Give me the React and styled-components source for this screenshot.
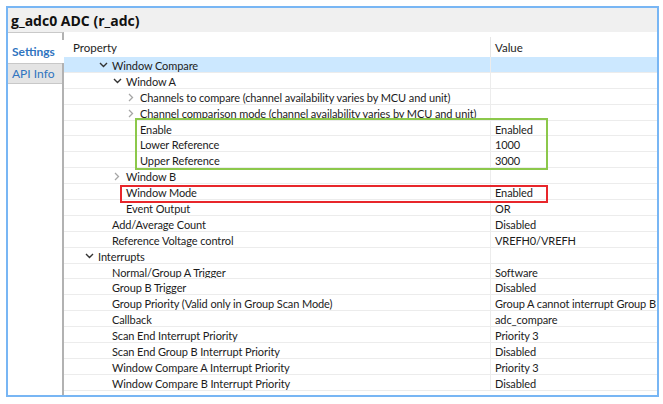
import styled, { createGlobalStyle } from "styled-components";

const GlobalStyle = createGlobalStyle`
  html, body {
    margin: 0;
    padding: 0;
    background: #ffffff;
  }
  body {
    font-family: Lato, "Open Sans", sans-serif;
    color: #1e1e1e;
  }
`;

const ROW_H = 15.9;

const Frame = styled.div`
  margin: 6px 0 0 6px;
  width: 653px;
  height: 391px;
  box-sizing: border-box;
  border: 2px solid #78b6f4;
  display: flex;
  flex-direction: column;
  overflow: hidden;
`;

const TitleBar = styled.div`
  height: 24px;
  flex: none;
  background: #f0f0f0;
  display: flex;
  align-items: center;
  padding-left: 3px;
  font-family: "Open Sans", sans-serif;
  font-size: 14px;
  font-weight: 700;
  color: #111;
`;

const Body = styled.div`
  flex: 1;
  display: flex;
  min-height: 0;
`;

const TabColumn = styled.div`
  width: 54px;
  flex: none;
  border-top: 1px solid #c9c9c9;
  border-right: 2px solid #b2b2b2;
  padding-top: 7px;
  display: flex;
  flex-direction: column;
`;

const Tab = styled.div`
  height: ${(p) => (p.$active ? 21 : 19)}px;
  display: flex;
  align-items: center;
  padding-left: 4px;
  font-size: 12px;
  color: #2f74c0;
  font-weight: ${(p) => (p.$active ? 700 : 400)};
  background: ${(p) => (p.$active ? "#ffffff" : "#e4e4e4")};
  border-top: 1px solid ${(p) => (p.$active ? "#ffffff" : "#c8c8c8")};
  border-bottom: 1px solid ${(p) => (p.$active ? "#ffffff" : "#c8c8c8")};
  margin-right: ${(p) => (p.$active ? "-2px" : "0")};
  position: relative;
`;

const TableArea = styled.div`
  flex: 1;
  padding-top: 5px;
  min-width: 0;
`;

const HeaderRow = styled.div`
  height: 20px;
  display: grid;
  grid-template-columns: 426px 1fr;
  font-size: 11.5px;
`;

const HeadCell = styled.div`
  display: flex;
  align-items: center;
  padding-left: ${(p) => p.$pad}px;
  border-left: ${(p) => (p.$divider ? "1px solid #e6e6e6" : "none")};
`;

const Rows = styled.div`
  position: relative;
`;

const Row = styled.div`
  height: ${ROW_H}px;
  box-sizing: border-box;
  display: grid;
  grid-template-columns: 426px 1fr;
  font-size: 11px;
  letter-spacing: -0.1px;
  color: #1c1c1c;
  background: ${(p) => (p.$selected ? "#cce8ff" : "transparent")};
  border-bottom: 1px solid #ececec;
`;

const PropCell = styled.div`
  display: flex;
  align-items: center;
  white-space: nowrap;
  overflow: hidden;
  padding-left: ${(p) => 2 + p.$level * 14}px;
  padding-top: 2px;
`;

const ValueCell = styled.div`
  display: flex;
  align-items: center;
  white-space: nowrap;
  overflow: hidden;
  padding-left: 4px;
  padding-top: 2px;
  border-left: 1px solid #ececec;
`;

const Twisty = styled.span`
  width: 18px;
  flex: none;
  display: inline-flex;
  justify-content: center;
  align-items: center;
`;

const Highlight = styled.div`
  position: absolute;
  box-sizing: border-box;
  border: 2px solid ${(p) => p.$color};
  pointer-events: none;
`;

const Chevron = ({ open }) =>
  open ? (
    <svg width="9" height="6" viewBox="0 0 9 6">
      <path d="M1 1 L4.5 4.5 L8 1" fill="none" stroke="#333" strokeWidth="1.4" />
    </svg>
  ) : (
    <svg width="6" height="9" viewBox="0 0 6 9">
      <path d="M1 1 L4.5 4.5 L1 8" fill="none" stroke="#a6a6a6" strokeWidth="1.3" />
    </svg>
  );

const rows = [
  { label: "Window Compare", level: 2, open: true, selected: true },
  { label: "Window A", level: 3, open: true },
  { label: "Channels to compare (channel availability varies by MCU and unit)", level: 4, open: false },
  { label: "Channel comparison mode (channel availability varies by MCU and unit)", level: 4, open: false },
  { label: "Enable", level: 4, value: "Enabled" },
  { label: "Lower Reference", level: 4, value: "1000" },
  { label: "Upper Reference", level: 4, value: "3000" },
  { label: "Window B", level: 3, open: false },
  { label: "Window Mode", level: 3, value: "Enabled" },
  { label: "Event Output", level: 3, value: "OR" },
  { label: "Add/Average Count", level: 2, value: "Disabled" },
  { label: "Reference Voltage control", level: 2, value: "VREFH0/VREFH" },
  { label: "Interrupts", level: 1, open: true },
  { label: "Normal/Group A Trigger", level: 2, value: "Software" },
  { label: "Group B Trigger", level: 2, value: "Disabled" },
  { label: "Group Priority (Valid only in Group Scan Mode)", level: 2, value: "Group A cannot interrupt Group B" },
  { label: "Callback", level: 2, value: "adc_compare" },
  { label: "Scan End Interrupt Priority", level: 2, value: "Priority 3" },
  { label: "Scan End Group B Interrupt Priority", level: 2, value: "Disabled" },
  { label: "Window Compare A Interrupt Priority", level: 2, value: "Priority 3" },
  { label: "Window Compare B Interrupt Priority", level: 2, value: "Disabled" },
];

export default function App() {
  return (
    <>
      <GlobalStyle />
      <Frame>
        <TitleBar>g_adc0 ADC (r_adc)</TitleBar>
        <Body>
          <TabColumn>
            <Tab $active>Settings</Tab>
            <Tab>API Info</Tab>
          </TabColumn>
          <TableArea>
            <HeaderRow>
              <HeadCell $pad={9}>Property</HeadCell>
              <HeadCell $pad={4} $divider>Value</HeadCell>
            </HeaderRow>
            <Rows>
              {rows.map((r) => (
                <Row key={r.label} $selected={r.selected}>
                  <PropCell $level={r.level}>
                    <Twisty>{r.open !== undefined && <Chevron open={r.open} />}</Twisty>
                    {r.label}
                  </PropCell>
                  <ValueCell>{r.value}</ValueCell>
                </Row>
              ))}
              <Highlight $color="#8cc84b" style={{ left: 71, top: 61, width: 413, height: 52 }} />
              <Highlight $color="#e8262b" style={{ left: 56, top: 128, width: 428, height: 18 }} />
            </Rows>
          </TableArea>
        </Body>
      </Frame>
    </>
  );
}
